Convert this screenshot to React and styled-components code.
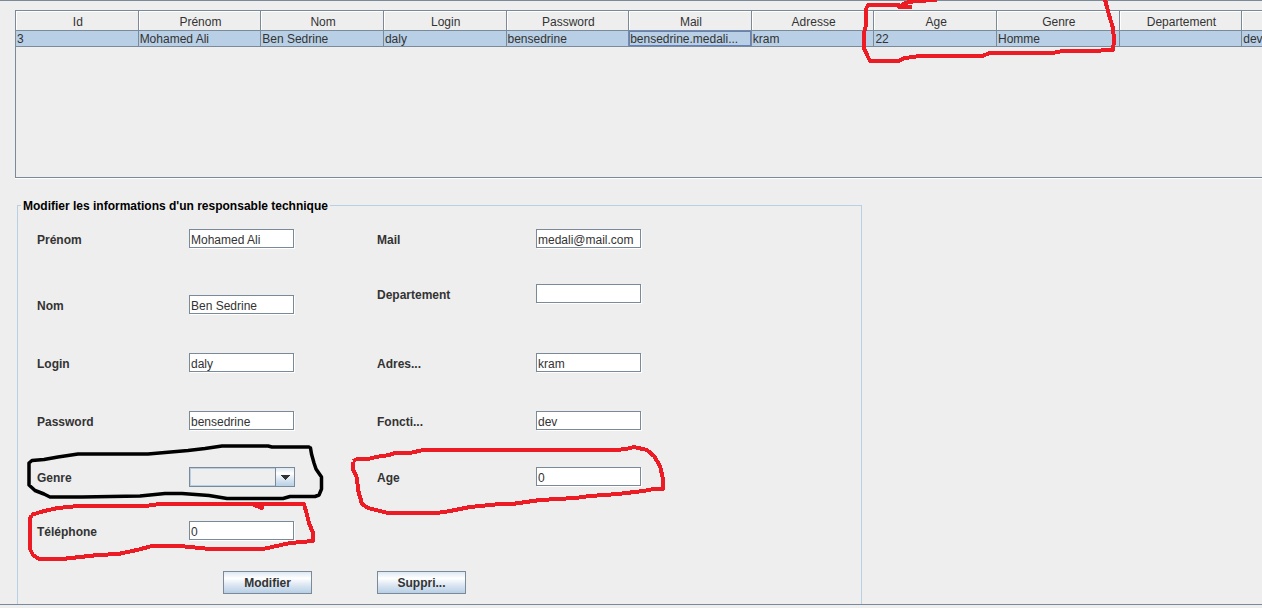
import React from 'react'
import styled, {createGlobalStyle} from 'styled-components'

const line = '#7a8a99'
const softLine = '#b8cfe5'
const metal = 'linear-gradient(#dde8f3, #fff 30%, #dde8f3 60%, #b8cfe5)'

const GlobalStyle = createGlobalStyle`
  *,
  *::before {
    box-sizing: border-box;
  }

  body {
    margin: 0;
    overflow: hidden;
    background: #eee;
    color: #333;
    font-family: 'Liberation Sans', Arial, sans-serif;
    font-size: 12px;
    line-height: 15px;
  }
`

const Frame = styled.main`
  position: relative;
  padding: 9px 0 0 15px;
  border-top: 1px solid ${line};
  border-bottom: 1px solid ${line};
  box-shadow: 0 1px 0 #fff;
`

const TablePane = styled.div`
  min-height: 168px;
  overflow: hidden;
  border: solid ${line};
  border-width: 1px 0 1px 1px;
  box-shadow: 0 1px 0 #fff;
`

const Table = styled.table`
  width: 1349px;
  table-layout: fixed;
  border-collapse: separate;
  border-spacing: 0;
`

const HeadCell = styled.th`
  height: 20px;
  padding: 3px 0 0 2px;
  border: solid ${line};
  border-width: 0 1px 1px 0;
  box-shadow: inset 1px 1px 0 #fff;
  font-weight: normal;
  line-height: 16px;
  text-align: center;
`

const Cell = styled.td`
  height: 16px;
  padding: 1px 1px 0;
  overflow: hidden;
  border: solid ${line};
  border-width: 0 1px 1px 0;
  background: ${softLine};
  box-shadow: ${props => (props.$focused ? 'inset 0 0 0 1px #6382bf' : 'none')};
  line-height: 14px;
  white-space: nowrap;
`

const FormGroup = styled.fieldset`
  max-width: 845px;
  margin: 19px 0 0 2px;
  padding: 15px 19px 10px;
  border: 1px solid ${softLine};
  border-bottom: 0;
`

const Legend = styled.legend`
  margin-left: -16px;
  padding: 2px 2px 0;
  color: #000;
  font-weight: bold;
`

const Columns = styled.div`
  display: flex;
  gap: 65px;
`

const Column = styled.div`
  width: 275px;
`

const Row = styled.div`
  display: flex;
  align-items: center;
  margin-top: ${props => props.$space || 0}px;
`

const Label = styled.label`
  width: ${props => props.$width}px;
  padding-top: 3px;
  font-weight: bold;
`

const Input = styled.input`
  width: 105px;
  height: 19px;
  padding: 2px 1px 0;
  border: 1px solid ${line};
  border-radius: 0;
  outline: 0;
  background: #fff;
  box-shadow: 1px 1px 0 #fff;
  color: inherit;
  font: inherit;
`

const Combo = styled.div`
  position: relative;
  display: flex;
`

const Select = styled.select`
  width: 106px;
  height: 20px;
  padding: 0 20px 0 2px;
  border: 1px solid ${line};
  border-radius: 0;
  appearance: none;
  background: #eee;
  box-shadow: inset 0 0 0 1px ${softLine};
  color: inherit;
  font: inherit;
`

const ComboArrow = styled.span`
  position: absolute;
  top: 1px;
  right: 1px;
  bottom: 1px;
  display: grid;
  place-items: center;
  width: 19px;
  border-left: 1px solid ${line};
  background: ${metal};
  pointer-events: none;
`

const Actions = styled.div`
  display: flex;
  gap: 65px;
  margin: 31px 0 0 186px;
`

const Button = styled.button`
  width: 89px;
  height: 23px;
  padding: 1px 0 0;
  border: 1px solid ${line};
  border-radius: 0;
  background: ${metal};
  color: inherit;
  font: inherit;
  font-weight: bold;
`

const Markings = styled.svg`
  position: absolute;
  top: -1px;
  left: 0;
  fill: none;
  pointer-events: none;
`

const columns = [
  ['Id', '3'],
  ['Prénom', 'Mohamed Ali'],
  ['Nom', 'Ben Sedrine'],
  ['Login', 'daly'],
  ['Password', 'bensedrine'],
  ['Mail', 'bensedrine.medali...'],
  ['Adresse', 'kram'],
  ['Age', '22'],
  ['Genre', 'Homme'],
  ['Departement', ''],
  ['', 'dev'],
]

function Field({id, label, value, space, labelWidth}) {
  return (
    <Row $space={space}>
      <Label htmlFor={id} $width={labelWidth}>
        {label}
      </Label>
      <Input id={id} defaultValue={value} />
    </Row>
  )
}

function UserTable() {
  return (
    <TablePane>
      <Table>
        <thead>
          <tr>
            {columns.map(([name]) => (
              <HeadCell key={name}>{name}</HeadCell>
            ))}
          </tr>
        </thead>
        <tbody>
          <tr>
            {columns.map(([name, value]) => (
              <Cell key={name} $focused={name === 'Mail'}>
                {value}
              </Cell>
            ))}
          </tr>
        </tbody>
      </Table>
    </TablePane>
  )
}

function HandMarkings() {
  return (
    <Markings width="1262" height="608" viewBox="0 0 1262 608" aria-hidden="true">
      <g
        stroke="#ed1c24"
        strokeWidth="4"
        strokeLinejoin="round"
        shapeRendering="crispEdges"
      >
        <path d="M937 0L915 1L905 3L899 7H912M902 6L898 5H868L866 9V25L864 33V48L867 55L870 61H898L905 58L920 56H982L990 53H1052L1063 51H1090L1113 50L1114 40L1113 28L1109 15L1107 7L1105 0" />
        <path d="M31 515L44 511L58 508L78 506H145L160 504H262V508L254 505M262 505L266 504H304L307 515L309 523L313 533V541L290 543L263 549H210L190 547L180 546H152L137 550L118 554L98 555L62 559H39L33 555L30 549V520L31 515" />
        <path d="M353 462V469L357 478L358 490L362 504L368 508L388 513H437L450 511L470 507L500 504L512 504L540 500L575 498L590 496L618 494L643 491L654 489H663V479L660 466L654 456L647 450L634 447L626 449L616 450H423L410 453H395L389 455L376 457L368 459H357L353 461" />
      </g>
      <path
        stroke="#000"
        strokeWidth="3.5"
        strokeLinecap="round"
        strokeLinejoin="round"
        d="M310.500 448L311.500 454L314 463L316 469L321.500 477V489L319 495L315 496.500H290L283 498.500H227L209 495.500L182 493.500H165L140 496L82 497H50L44 494L35 490.500L29 485V463L32 460.500L44 459.500L58 457L78 454H148L188 450.500L205 448.500L222 446H268L272 447H309"
      />
    </Markings>
  )
}

export default function App() {
  return (
    <Frame>
      <GlobalStyle />
      <UserTable />

      <FormGroup>
        <Legend>Modifier les informations d'un responsable technique</Legend>
        <Columns>
          <Column>
            <Field id="prenom" label="Prénom" value="Mohamed Ali" labelWidth={152} />
            <Field id="nom" label="Nom" value="Ben Sedrine" space={47} labelWidth={152} />
            <Field id="login" label="Login" value="daly" space={39} labelWidth={152} />
            <Field id="password" label="Password" value="bensedrine" space={39} labelWidth={152} />
            <Row $space={37}>
              <Label htmlFor="genre" $width={152}>
                Genre
              </Label>
              <Combo>
                <Select id="genre" defaultValue="">
                  <option value="" />
                </Select>
                <ComboArrow>
                  <svg width="10" height="5" shapeRendering="crispEdges">
                    <path d="M0 0H10L5 5Z" fill="#333" />
                  </svg>
                </ComboArrow>
              </Combo>
            </Row>
            <Field id="telephone" label="Téléphone" value="0" space={34} labelWidth={152} />
          </Column>

          <Column>
            <Field id="mail" label="Mail" value="medali@mail.com" labelWidth={159} />
            <Field id="departement" label="Departement" value="" space={36} labelWidth={159} />
            <Field id="adresse" label="Adres..." value="kram" space={50} labelWidth={159} />
            <Field id="fonction" label="Foncti..." value="dev" space={39} labelWidth={159} />
            <Field id="age" label="Age" value="0" space={37} labelWidth={159} />
          </Column>
        </Columns>

        <Actions>
          <Button type="button">Modifier</Button>
          <Button type="button">Suppri...</Button>
        </Actions>
      </FormGroup>

      <HandMarkings />
    </Frame>
  )
}
